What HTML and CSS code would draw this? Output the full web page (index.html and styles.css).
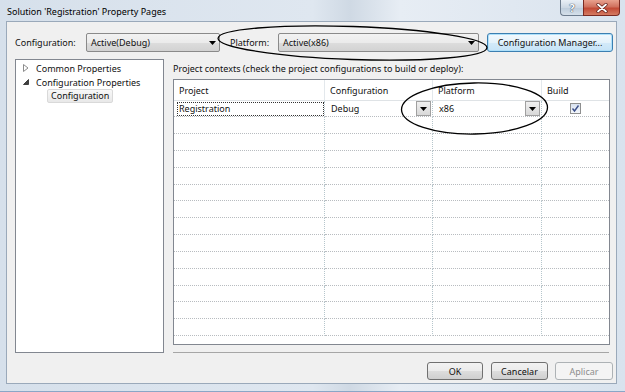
FILE: index.html
```html
<!DOCTYPE html>
<html>
<head>
<meta charset="utf-8">
<link rel="stylesheet" href="styles.css">
</head>
<body>
<div class="window">
  <div class="titlebar">
    <span class="title">Solution 'Registration' Property Pages</span>
    <div class="caption-btns">
      <div class="cap help">?</div>
      <div class="cap close">
        <svg width="12" height="10" viewBox="0 0 12 10"><path d="M2 1.5 L10 8.5 M10 1.5 L2 8.5" stroke="#5a1a14" stroke-width="3.2" stroke-linecap="round"/><path d="M2 1.5 L10 8.5 M10 1.5 L2 8.5" stroke="#fff" stroke-width="1.8" stroke-linecap="round"/></svg>
      </div>
    </div>
  </div>
  <div class="client">
    <div class="toprow">
      <span class="lbl lbl1">Configuration:</span>
      <div class="combo c1"><span>Active(Debug)</span><svg class="arr" width="7" height="4" viewBox="0 0 7 4"><path d="M0 0H7L3.5 4Z" fill="#000"/></svg></div>
      <span class="lbl lbl2">Platform:</span>
      <div class="combo c2"><span>Active(x86)</span><svg class="arr" width="7" height="4" viewBox="0 0 7 4"><path d="M0 0H7L3.5 4Z" fill="#000"/></svg></div>
      <div class="btn focus">Configuration Manager...</div>
    </div>
    <div class="main">
      <div class="tree">
        <div class="node"><svg class="tw" width="6" height="8" viewBox="0 0 6 8"><path d="M0.5 0.5 L5 4 L0.5 7.5 Z" fill="#fff" stroke="#8c8c8c"/></svg><span>Common Properties</span></div>
        <div class="node"><svg class="tw" width="6" height="8" viewBox="0 0 6 8"><path d="M5.5 1.5 L5.5 6.5 L0.5 6.5 Z" fill="#404040" stroke="#404040"/></svg><span>Configuration Properties</span></div>
        <div class="node child"><span class="sel">Configuration</span></div>
      </div>
      <div class="page">
        <div class="caption">Project contexts (check the project configurations to build or deploy):</div>
        <div class="grid">
          <div class="row head">
            <div class="cell">Project</div>
            <div class="cell">Configuration</div>
            <div class="cell">Platform</div>
            <div class="cell">Build</div>
          </div>
          <div class="row first">
            <div class="cell"><span class="focusbox">Registration</span></div>
            <div class="cell dd"><span>Debug</span><span class="ddbtn"><svg width="7" height="4" viewBox="0 0 7 4"><path d="M0 0H7L3.5 4Z" fill="#000"/></svg></span></div>
            <div class="cell dd"><span>x86</span><span class="ddbtn"><svg width="7" height="4" viewBox="0 0 7 4"><path d="M0 0H7L3.5 4Z" fill="#000"/></svg></span></div>
            <div class="cell center"><span class="chk"><svg width="9" height="9" viewBox="0 0 9 9"><path d="M1.5 4.5 L3.5 7 L7.5 1.5" fill="none" stroke="#3b4f8a" stroke-width="1.4"/></svg></span></div>
          </div>
          <div class="row"><div class="cell"></div><div class="cell"></div><div class="cell"></div><div class="cell"></div></div>
          <div class="row"><div class="cell"></div><div class="cell"></div><div class="cell"></div><div class="cell"></div></div>
          <div class="row"><div class="cell"></div><div class="cell"></div><div class="cell"></div><div class="cell"></div></div>
          <div class="row"><div class="cell"></div><div class="cell"></div><div class="cell"></div><div class="cell"></div></div>
          <div class="row"><div class="cell"></div><div class="cell"></div><div class="cell"></div><div class="cell"></div></div>
          <div class="row"><div class="cell"></div><div class="cell"></div><div class="cell"></div><div class="cell"></div></div>
          <div class="row"><div class="cell"></div><div class="cell"></div><div class="cell"></div><div class="cell"></div></div>
          <div class="row"><div class="cell"></div><div class="cell"></div><div class="cell"></div><div class="cell"></div></div>
          <div class="row"><div class="cell"></div><div class="cell"></div><div class="cell"></div><div class="cell"></div></div>
          <div class="row"><div class="cell"></div><div class="cell"></div><div class="cell"></div><div class="cell"></div></div>
          <div class="row"><div class="cell"></div><div class="cell"></div><div class="cell"></div><div class="cell"></div></div>
          <div class="row"><div class="cell"></div><div class="cell"></div><div class="cell"></div><div class="cell"></div></div>
          <div class="row"><div class="cell"></div><div class="cell"></div><div class="cell"></div><div class="cell"></div></div>
        </div>
      </div>
    </div>
    <div class="footer">
      <div class="btn ok">OK</div>
      <div class="btn cancel">Cancelar</div>
      <div class="btn apply disabled">Aplicar</div>
    </div>
  </div>
  <svg class="annot" width="625" height="392" viewBox="0 0 625 392">
    <ellipse cx="352.5" cy="43" rx="134.5" ry="16.5" transform="rotate(2 352.5 43)" fill="none" stroke="#000" stroke-width="1.3"/>
    <ellipse cx="474.5" cy="108.5" rx="73" ry="25.5" transform="rotate(-1 474.5 108.5)" fill="none" stroke="#000" stroke-width="1.3"/>
  </svg>
</div>
</body>
</html>
```
FILE: styles.css
```css
* { box-sizing: border-box; }
html, body { margin: 0; padding: 0; }
body {
  width: 625px;
  height: 392px;
  overflow: hidden;
  background: #6a8bb0;
  font-family: "Noto Sans", "DejaVu Sans", sans-serif;
  font-size: 9px;
  color: #111;
}
.window {
  position: relative;
  width: 625px;
  height: 392px;
  padding: 0 8px 7px 6px;
  background: linear-gradient(90deg, #d6e0eb 0%, #dfe7f0 50%, #cfd9e4 56%, #e7edf4 64%, #d9e3ee 100%);
  border-bottom: 1px solid #8aa6c6;
  display: flex;
  flex-direction: column;
}
.titlebar {
  height: 21px;
  display: flex;
  align-items: flex-start;
  justify-content: space-between;
  flex: none;
}
.title {
  padding-left: 1px;
  line-height: 24px;
  color: #000;
}
.caption-btns {
  display: flex;
  margin-right: -3px;
}
.cap {
  height: 16px;
  display: flex;
  align-items: center;
  justify-content: center;
  border: 1px solid #6d7c8e;
  border-top: none;
}
.help {
  width: 23px;
  border-radius: 0 0 0 4px;
  background: linear-gradient(#e9eff6, #cdd8e4 50%, #bccbdb 51%, #d5e0ea);
  color: #fff;
  font-weight: bold;
  font-size: 11px;
  text-shadow: 0 0 1px #2a3a50, 0 0 1px #2a3a50;
  border-right: none;
}
.close {
  width: 37px;
  border-radius: 0 0 4px 0;
  border-color: #7a2a22;
  background: linear-gradient(#e8a18e, #d0715e 45%, #c24a36 55%, #d47b62);
}
.client {
  flex: 1;
  background: #f0f0f0;
  border: 1px solid #9aa9ba;
  display: flex;
  flex-direction: column;
}
.toprow {
  margin-top: 11px;
  height: 19px;
  display: flex;
  align-items: center;
  padding-left: 8px;
}
.lbl { white-space: nowrap; }
.lbl1 { width: 71px; }
.lbl2 { width: 48px; margin-left: 10px; }
.combo {
  height: 19px;
  border: 1px solid #8a8a8a;
  border-radius: 2px;
  background: linear-gradient(#f2f2f2, #ebebeb 50%, #dddddd 51%, #d2d2d2);
  display: flex;
  align-items: center;
  justify-content: space-between;
  padding: 0 3px 0 4px;
}
.c1 { width: 134px; }
.c2 { width: 201px; }
.arr { flex: none; margin-top: 1px; }
.btn {
  height: 19px;
  border: 1px solid #707070;
  border-radius: 3px;
  background: linear-gradient(#f2f2f2, #ebebeb 50%, #dddddd 51%, #cfcfcf);
  display: flex;
  align-items: center;
  justify-content: center;
  white-space: nowrap;
}
.btn.focus {
  width: 126px;
  margin-left: 8px;
  border-color: #3c7fb1;
  box-shadow: inset 0 0 0 1px #aee0fa;
  background: linear-gradient(#f3f9fd, #e4f2fb 50%, #d3eaf9 51%, #c6e3f7);
}
.main {
  margin-top: 7px;
  height: 294px;
  display: flex;
  padding-left: 8px;
  flex: none;
}
.tree {
  width: 149px;
  height: 294px;
  background: #fff;
  border: 1px solid #828790;
  padding-top: 1px;
}
.node {
  height: 14px;
  display: flex;
  align-items: center;
  padding-left: 7px;
  white-space: nowrap;
}
.tw { flex: none; width: 6px; margin-right: 7px; }
.node.child { padding-left: 31px; }
.sel {
  display: inline-block;
  height: 14px;
  line-height: 12px;
  padding: 0 3px;
  border: 1px solid #d9d9d9;
  border-radius: 2px;
  background: linear-gradient(#f8f8f8, #e8e8e8);
}
.page {
  margin-left: 9px;
  width: 436px;
  height: 294px;
  border-bottom: 1px solid #a6a6a6;
  display: flex;
  flex-direction: column;
}
.caption {
  height: 20px;
  line-height: 20px;
  white-space: nowrap;
}
.grid {
  height: 266px;
  width: 437px;
  border: 1px solid #828790;
  background: #fff;
  overflow: hidden;
}
.row {
  display: grid;
  grid-template-columns: 151px 108px 109px 1fr;
  height: 16.83px;
}
.row.head { height: 20.5px; }
.cell {
  border-right: 1px dotted #b6c6cc;
  border-bottom: 1px dotted #b8bcc0;
  display: flex;
  align-items: center;
  padding-left: 6px;
  white-space: nowrap;
  overflow: hidden;
}
.cell:last-child { border-right: none; }
.head .cell {
  border-right: 1px solid #e3e8ec;
  border-bottom: 1px solid #dfe3e6;
  padding-left: 5px;
  padding-top: 1px;
}
.head .cell:last-child { border-right: none; }
.first .cell { padding-top: 1px; }
.focusbox {
  display: flex;
  align-items: center;
  width: 147px;
  height: 14px;
  margin-left: -3px;
  padding-left: 1px;
  border: 1px dotted #333;
}
.dd { justify-content: space-between; padding-right: 1px; }
.ddbtn {
  width: 15px;
  height: 15px;
  border: 1px solid #a0a0a0;
  background: linear-gradient(#f0f0f0, #d8d8d8);
  display: flex;
  align-items: center;
  justify-content: center;
}
.center { justify-content: center; padding-left: 0; }
.chk {
  width: 11px;
  height: 11px;
  border: 1px solid #8e8f8f;
  background: linear-gradient(#d8e2f0, #f4f7fb);
  display: flex;
  align-items: center;
  justify-content: center;
}
.footer {
  margin-top: 9px;
  display: flex;
  justify-content: flex-end;
  padding-right: 3px;
}
.footer .btn { height: 18px; }
.ok { width: 56px; }
.cancel { width: 57px; margin-left: 8px; }
.apply { width: 58px; margin-left: 7px; }
.btn.disabled {
  border-color: #adb2b5;
  background: #f4f4f4;
  color: #8d8d8d;
}
.annot {
  position: absolute;
  left: 0;
  top: 0;
  pointer-events: none;
}
```
